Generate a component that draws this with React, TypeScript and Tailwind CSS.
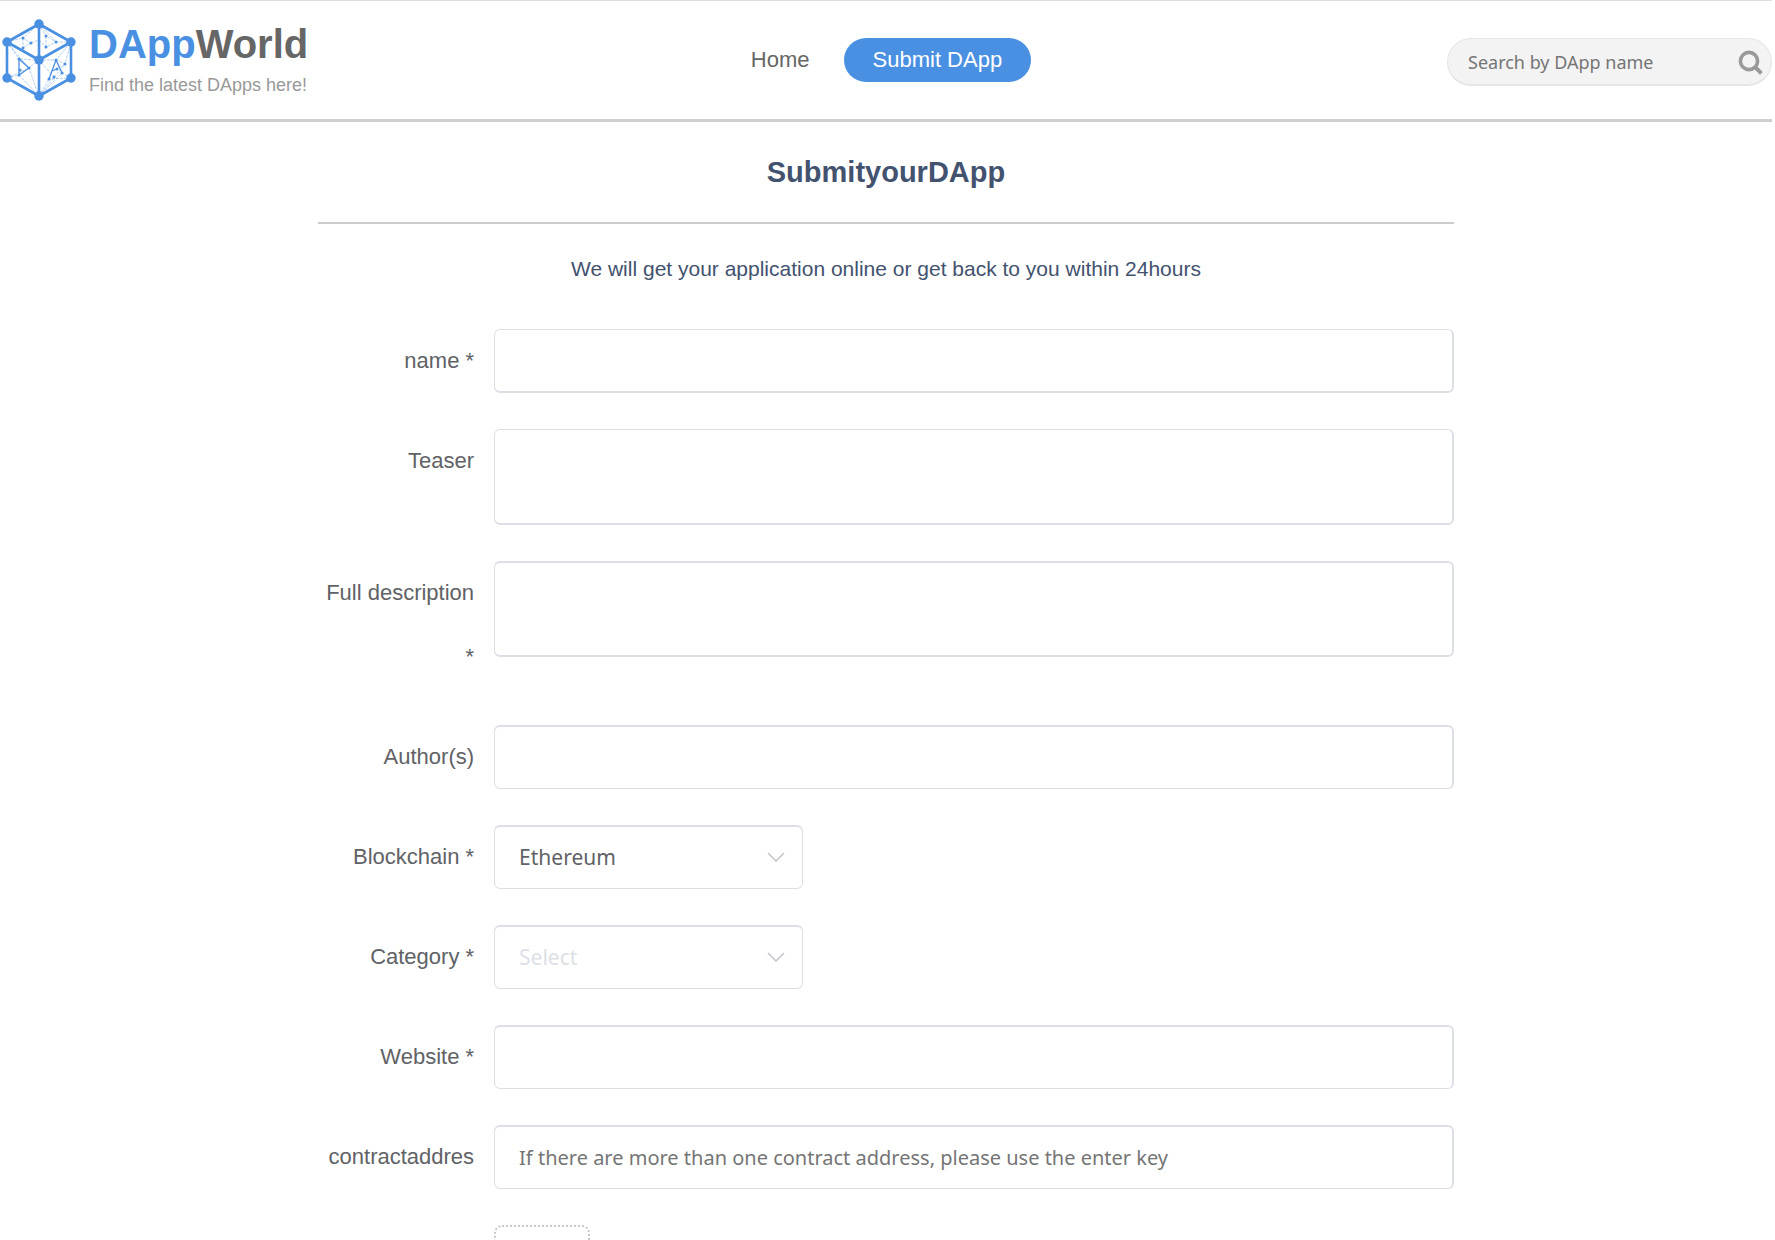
import { useState } from "react";
import type { ReactNode } from "react";

const NODES = [
  [39, 24],
  [7, 42],
  [71, 42],
  [39, 60],
  [7, 78],
  [71, 78],
  [39, 96],
];

const DOTS = [
  [23, 38], [31, 43], [23, 48],
  [46, 36], [56, 42], [46, 47],
  [19, 59], [29, 68], [19, 75], [20, 70],
  [56, 60], [49, 79], [62, 73], [65, 64], [54, 77], [57, 69],
];

const INPUT =
  "block w-full rounded-md border border-[#dcdfe6] bg-white px-6 font-['Noto_Sans',sans-serif] text-[#606266] placeholder:text-[#757575] outline-none focus:border-[#4a90e2]";

function Logo() {
  return (
    <svg viewBox="2 19 74 82" className="h-[82px] w-[74px]" fill="none" stroke="#4a90e2" aria-hidden="true">
      <path
        d="M39 24 7 42V78L39 96 71 78V42ZM7 42 39 60 71 42M39 60V96M39 24V60"
        strokeWidth="2.6"
        strokeLinejoin="round"
      />
      <path
        d="M39 24 23 38 31 43 23 48M23 38V48M31 43 39 40M39 24 46 36 56 42 46 47M46 36V47M39 40 46 47M56 42 71 42M39 24 56 42M7 42 23 38M7 42 19 59M7 42 29 68M7 78 19 75M7 78 29 68M39 60 29 68 39 96M39 60 19 59M19 75 39 96M39 60 56 60 71 42M39 60 54 77M39 96 49 79M39 96 62 73 71 78M56 60 65 64 71 42M65 64 57 69M39 96 65 64M71 78 49 79"
        strokeWidth="0.6"
        strokeDasharray="3 1"
        opacity="0.7"
      />
      <path d="M19 59V75L29 68ZM56 60 49 79M56 60 62 73M52 71 57 69" strokeWidth="1.3" />
      <g fill="#4a90e2" stroke="none">
        {NODES.map(([x, y]) => (
          <circle key={`${x}-${y}`} cx={x} cy={y} r="4.7" />
        ))}
        {DOTS.map(([x, y]) => (
          <circle key={`${x}-${y}`} cx={x} cy={y} r="1.5" />
        ))}
      </g>
    </svg>
  );
}

function Header() {
  return (
    <header className="flex h-[122px] items-start justify-between border-t border-b-3 border-t-[#dedede] border-b-[#cfcfcf]">
      <a href="#" className="flex flex-1 items-start pt-[18px] pl-[2px]">
        <Logo />
        <span className="ml-[13px] flex flex-col">
          <span className="text-[40px] leading-[50px] font-bold text-[#4a90e2]">
            DApp<span className="text-[#666]">World</span>
          </span>
          <span className="text-lg leading-8 text-[#999]">Find the latest DApps here!</span>
        </span>
      </a>

      <nav className="flex items-center gap-[34px] pt-[37px] pl-2 text-[22px] leading-[44px]">
        <a href="#" className="text-[#666]">Home</a>
        <a href="#" className="rounded-full bg-[#4a90e2] px-[29px] text-white">Submit DApp</a>
      </nav>

      <form className="flex flex-1 justify-end pt-[37px]" onSubmit={(e) => e.preventDefault()}>
        <div className="flex h-12 w-[325px] items-center rounded-full border border-b-2 border-[#e6e6e6] bg-[#f3f3f3] pr-2 pl-5">
          <input
            type="text"
            aria-label="Search by DApp name"
            placeholder="Search by DApp name"
            className="min-w-0 flex-1 bg-transparent font-['Noto_Sans',sans-serif] text-lg text-[#666] placeholder:text-[#757575] outline-none"
          />
          <button type="submit" aria-label="Search">
            <svg viewBox="0 0 26 26" className="h-[26px] w-[26px]" fill="none" stroke="#999" strokeWidth="3.6">
              <circle cx="12" cy="12" r="8.6" />
              <path d="M18 18l6.4 6.4" strokeWidth="4" />
            </svg>
          </button>
        </div>
      </form>
    </header>
  );
}

function Field({ id, label, children }: { id: string; label: string; children: ReactNode }) {
  return (
    <div className="flex items-start">
      <label htmlFor={id} className="w-44 shrink-0 pr-5 text-right text-[22px] leading-[64px] text-[#606266]">
        {label}
      </label>
      <div className="min-w-0 flex-1">{children}</div>
    </div>
  );
}

interface DropdownProps {
  id: string;
  value: string;
  options: string[];
  onChange: (value: string) => void;
}

function Dropdown({ id, value, options, onChange }: DropdownProps) {
  return (
    <div className="relative w-[309px]">
      <select
        id={id}
        value={value}
        onChange={(e) => onChange(e.target.value)}
        className={`${INPUT} h-16 appearance-none border-t-2 text-[21px] ${value ? "" : "text-[#dcdfe6]"}`}
      >
        <option value="" disabled>Select</option>
        {options.map((o) => (
          <option key={o} value={o}>{o}</option>
        ))}
      </select>
      <svg
        viewBox="0 0 18 10"
        className="pointer-events-none absolute top-[27px] right-[18px] h-[10px] w-[18px]"
        fill="none"
        stroke="#c0c4cc"
        strokeWidth="1.5"
      >
        <path d="M1 1l8 8 8-8" />
      </svg>
    </div>
  );
}

export default function App() {
  const [blockchain, setBlockchain] = useState("Ethereum");
  const [category, setCategory] = useState("");

  return (
    <div className="h-screen overflow-hidden bg-white pr-[3px] font-['Liberation_Sans',Arial,sans-serif]">
      <Header />

      <main className="mx-auto w-[64.1%]">
        <h1 className="border-b-2 border-[#ccc] text-center text-[29px] leading-[100px] font-bold text-[#42526f]">
          SubmityourDApp
        </h1>
        <p className="pt-[30px] pb-[45px] text-center text-[21px] leading-[30px] text-[#42526f]">
          We will get your application online or get back to you within 24hours
        </p>

        <form className="flex flex-col gap-9" onSubmit={(e) => e.preventDefault()}>
          <Field id="name" label="name *">
            <input id="name" type="text" className={`${INPUT} h-16 border-r-2 border-b-2 text-xl`} />
          </Field>
          <Field id="teaser" label="Teaser">
            <textarea id="teaser" className={`${INPUT} h-24 resize-none border-r-2 border-b-2 py-4 text-xl`} />
          </Field>
          <Field id="description" label="Full description *">
            <textarea id="description" className={`${INPUT} h-24 resize-none border-y-2 border-r-2 py-4 text-xl`} />
          </Field>
          <Field id="authors" label="Author(s)">
            <input id="authors" type="text" className={`${INPUT} h-16 border-t-2 border-r-2 text-xl`} />
          </Field>
          <Field id="blockchain" label="Blockchain *">
            <Dropdown
              id="blockchain"
              value={blockchain}
              options={["Ethereum", "EOS", "Steem"]}
              onChange={setBlockchain}
            />
          </Field>
          <Field id="category" label="Category *">
            <Dropdown
              id="category"
              value={category}
              options={["Games", "Exchanges", "Social", "Finance"]}
              onChange={setCategory}
            />
          </Field>
          <Field id="website" label="Website *">
            <input id="website" type="text" className={`${INPUT} h-16 border-t-2 border-r-2 text-xl`} />
          </Field>
          <Field id="contract" label="contractaddres">
            <input
              id="contract"
              type="text"
              placeholder="If there are more than one contract address, please use the enter key"
              className={`${INPUT} h-16 border-t-2 border-r-2 text-xl`}
            />
          </Field>
          <Field id="logo" label="">
            <button
              id="logo"
              type="button"
              aria-label="Upload logo"
              className="block h-24 w-24 rounded-lg border-2 border-dotted border-[#c8c8c8]"
            />
          </Field>
        </form>
      </main>
    </div>
  );
}
